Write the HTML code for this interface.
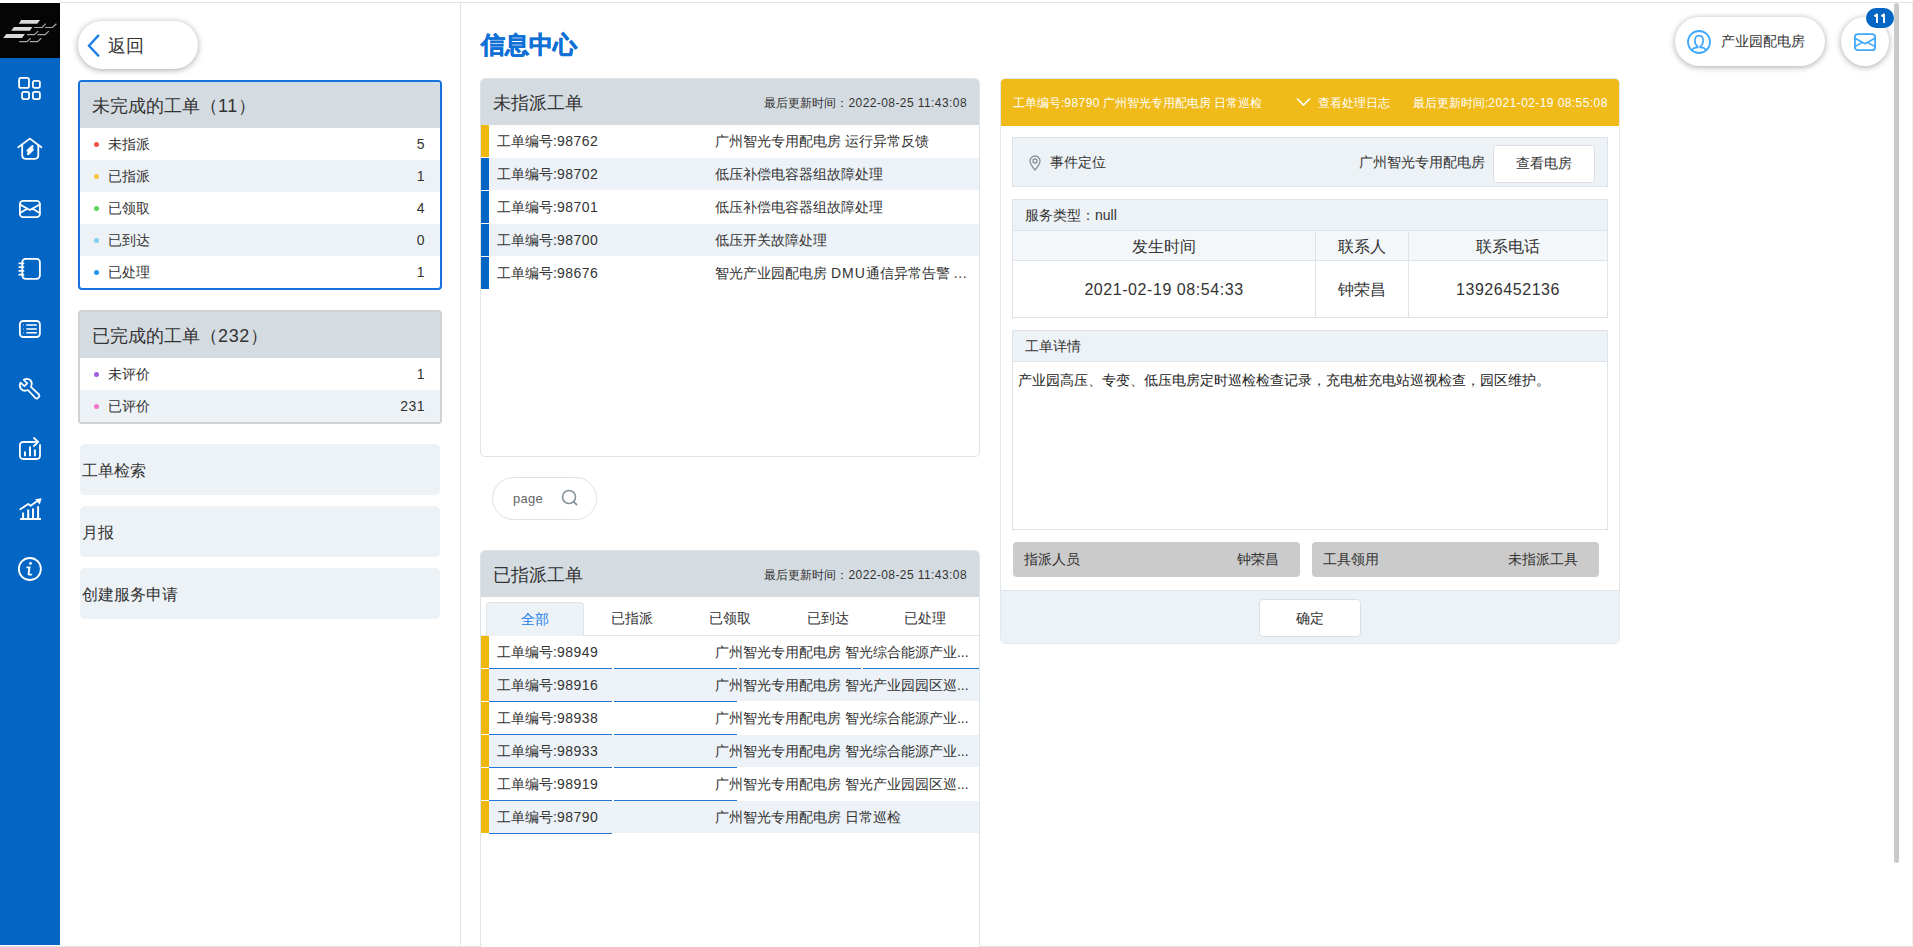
<!DOCTYPE html>
<html><head><meta charset="utf-8">
<style>
*{box-sizing:border-box;margin:0;padding:0}
html,body{width:1913px;height:947px;overflow:hidden;background:#fff;font-family:"Liberation Sans",sans-serif;color:#333}
.abs{position:absolute}
#topline{left:60px;top:2px;width:1853px;height:1px;background:#e2e4e4}
#botline{left:0;top:945.5px;width:1913px;height:1.5px;background:#e2e2e2}
#side{left:0;top:3px;width:60px;height:942px;background:#0366c4}
#logo{left:0;top:3px;width:60px;height:55px;background:#050505}
.ico{position:absolute;left:17px;width:26px;height:26px}
#divider{left:460px;top:3px;width:1px;height:942px;background:#e3e3e3}
#back{left:78px;top:21px;width:120px;height:48px;border-radius:24px;background:#fff;box-shadow:0 1px 6px rgba(0,0,0,.35)}
#back .t{position:absolute;left:30px;top:14px;font-size:18px;line-height:22px;color:#333}
.card{position:absolute;left:78px;width:364px;border-radius:4px;overflow:hidden;background:#fff}
.card .hd{height:46px;background:#d5dce1;font-size:18px;line-height:48px;padding-left:12px;color:#333}
.card .row{height:32px;line-height:32px;font-size:14px;position:relative;padding-left:28px}
.card .row.alt{background:#edf2f7}
.card .row .dot{position:absolute;left:14px;top:14px;width:5px;height:5px;border-radius:50%}
.card .row .n{position:absolute;right:15px;top:0}
.menu{position:absolute;left:80px;width:360px;height:51px;background:#edf2f7;border-radius:5px;font-size:16px;line-height:53px;padding-left:2px;color:#333}
#title{left:481px;top:29.3px;font-size:23.6px;line-height:32px;font-weight:bold;color:#0f70d6;-webkit-text-stroke:0.6px #0f70d6}
.panel{position:absolute;left:480px;width:500px;border:1px solid #e0e3e6;border-radius:5px;overflow:hidden;background:#fff}
.panel .hd{height:46px;background:#d5dce1;position:relative}
.panel .hd .t{position:absolute;left:12px;top:13px;font-size:18px;line-height:22px;color:#333}
.panel .hd .tm{position:absolute;right:12px;top:16px;font-size:12px;line-height:16px;color:#333}
.prow{height:33px;position:relative;font-size:14px;line-height:33px}
.prow.alt{background:linear-gradient(#ecf2f7,#ecf2f7) no-repeat;background-size:100% 32px}
.prow .bar{position:absolute;left:0;top:0;width:8px;height:32px;background:#0366c4}
.prow .bar.y{background:#f0b70f}
.prow .a{position:absolute;left:16px;top:0}
.prow .b{position:absolute;left:234px;top:0}

#search{left:492px;top:477px;width:105px;height:43px;border:1px solid #dde1e6;border-radius:22px;background:#fff}
#search .t{position:absolute;left:20px;top:12px;font-size:13px;line-height:18px;color:#666;letter-spacing:0.3px}
.tabs{position:relative;height:39px;border-bottom:1px solid #e3e6e9}
.tab{position:absolute;top:5px;width:97.6px;height:34px;text-align:center;font-size:14px;line-height:33px;color:#333}
.tab.on{background:#edf2f7;border:1px solid #dfe4e9;border-bottom:none;border-radius:4px 4px 0 0;color:#1a7ee8;line-height:32px}
.prow .ul{position:absolute;bottom:-0.2px;height:1.5px;background:#2377d2;z-index:2}
#detail{left:1000px;top:78px;width:620px;height:566px;border:1px solid #e3e8ec;border-radius:5px;overflow:hidden;background:#fff}
#dhd{position:absolute;left:0;top:0;width:618px;height:47px;background:#f0ba18;color:#fff;font-size:12px;line-height:16px}
.box{position:absolute;left:11px;width:596px;border:1px solid #dde3e8;background:#edf2f6}
.gbar{position:absolute;top:463px;height:35px;background:#cbcbcb;border-radius:4px;font-size:14px;line-height:35px;color:#333}
#dfoot{position:absolute;left:0;top:511px;width:618px;height:54px;background:#edf2f6;border-top:1px solid #dde3e8}
.btnw{position:absolute;background:#fff;border:1px solid #dcdfe6;border-radius:4px;text-align:center;font-size:14px;color:#333}
#user{left:1675px;top:17px;width:150px;height:49px;border-radius:25px;background:#fff;box-shadow:0 1px 6px rgba(0,0,0,.35)}
#mail{left:1841px;top:17px;width:48px;height:49px;border-radius:50%;background:#fff;box-shadow:0 1px 6px rgba(0,0,0,.35)}
#badge{left:1866px;top:8px;width:28px;height:20px;border-radius:10px;background:#0366c4;color:#fff;font-size:12.5px;line-height:20px;text-align:center;-webkit-text-stroke:0.4px #fff}
#scroll{left:1894px;top:3px;width:5px;height:860px;border-radius:3px;background:#c9cacc}
#rline{left:1912px;top:3px;width:1px;height:942px;background:#eee}
.dg{letter-spacing:0.035em}
</style></head><body>
<div class="abs" id="topline"></div>
<div class="abs" id="side"></div>
<div class="abs" id="logo"></div>
<div class="abs" id="divider"></div>
<svg class="abs" style="left:0;top:0" width="60" height="600" viewBox="0 0 60 600">
 <g fill="#d9d9d9">
  <polygon points="21.1,19.9 40.1,19.9 37.2,23.7 18.8,23.7"/>
  <polygon points="13.9,26.9 32.5,26.9 29.8,30.7 11.2,30.7"/>
  <polygon points="6.3,34.1 24.9,34.1 22,37.9 3.2,37.9"/>
 </g>
 <g fill="none" stroke="#a8a8a8" stroke-width="1.2">
  <path d="M34.2 27.5 H42.2 L45.6 23.7 M45 27.5 H52.4 L56.4 23.7"/>
  <path d="M27 34.7 H34.4 L38.2 31.1 M37.4 34.7 H45 L48.8 31.1"/>
  <path d="M19.2 41.7 H27 L30.6 38.3 M29.8 41.7 H37.4 L41.2 38.3"/>
 </g>
 <g fill="none" stroke="#fff" stroke-width="1.8" stroke-linejoin="round" stroke-linecap="round">
  <rect x="19.1" y="77.9" width="9.9" height="10" rx="2"/>
  <rect x="32.9" y="80.8" width="7" height="7.1" rx="1.8"/>
  <rect x="22.1" y="91.8" width="7" height="7.3" rx="1.8"/>
  <rect x="32.9" y="91.8" width="7" height="7.3" rx="1.8"/>
  <path d="M18.3 147.2 L29.85 138.6 L41.4 147.2"/>
  <path d="M22.2 145 V155.6 Q22.2 158.8 25.4 158.8 H35.1 Q38.3 158.8 38.3 155.6 V145"/>
  <rect x="19.9" y="200.8" width="20" height="16.4" rx="3.3"/>
  <path d="M20 204.5 L29.85 210 L39.8 204.5 M20 213 L26.3 209.3 M39.8 213 L33.4 209.3"/>
  <rect x="22.3" y="258.9" width="17.6" height="20" rx="3.3"/>
  <path d="M19.3 263.3 H23.5 M19.3 267.1 H23.5 M19.3 270.9 H23.5 M19.3 274.7 H23.5"/>
  <rect x="19.9" y="321" width="20" height="16" rx="3.3"/>
  <path d="M23.5 325 H24 M23.5 329 H24 M23.5 332.8 H24 M26.3 325 H36.8 M26.3 329 H36.8 M26.3 332.8 H36.8" stroke-linecap="butt" stroke-width="1.6"/>
  <path d="M23.8 379.8 Q27.6 377.6 30.6 380.4 Q32.8 383.4 30.9 386.9 L39 394.5 Q40 395.6 39 396.8 L37.6 398.2 Q36.5 399.1 35.5 398.1 L27.9 390 Q24.1 391.8 21.2 389.1 Q18.8 386.2 20.5 382.7 L24.3 386.2 L27.3 383.3 Z"/>
  <path d="M33.6 441.9 H23.6 Q19.9 441.9 19.9 445.6 V455.5 Q19.9 459 23.6 459 H36.4 Q40 459 40 455.5 V445"/>
  <path d="M23.5 441.9 H38.2 M33.9 438 L38.2 441.9 L33.9 446"/>
  <path d="M25 451.5 V456.3 M30 446.6 V456.3 M34.9 449.4 V456.3" stroke-linecap="butt" stroke-width="2"/>
  <path d="M20.1 519 H41 M23.1 512.4 V518 M28.2 509.4 V518 M33 508.4 V518 M38.1 506.2 V518" stroke-linecap="butt" stroke-width="2"/>
  <path d="M20.3 509.3 L28.2 504 L30.6 505.8 L36.6 501.6"/>
  <circle cx="29.85" cy="569" r="11"/>
 </g>
 <polygon fill="#fff" points="41.7,498.2 35.1,499.3 39.7,504.6"/>
 <path fill="none" stroke="#fff" stroke-width="2.6" stroke-linecap="round" stroke-linejoin="round" d="M32.4 146.4 L27.8 150.6 L32.6 149.6 L28.2 153.8"/>
 <circle fill="#fff" cx="30.5" cy="563.4" r="1.4"/>
 <path fill="none" stroke="#fff" stroke-width="1.9" stroke-linecap="round" d="M27.3 567.4 H29.5 L28.6 573.5 Q28.5 574.6 29.6 574.6 H31.3"/>
</svg>
<div class="abs" id="botline"></div>

<div class="abs" id="back"><svg class="abs" style="left:9px;top:13px" width="14" height="24" viewBox="0 0 14 24"><path d="M11.3 1.6 L2 11.7 L11.3 21.6" fill="none" stroke="#1a7ee8" stroke-width="2.3" stroke-linecap="round"/></svg><span class="t">返回</span></div>

<div class="card" style="top:80px;border:2px solid #1672dd">
 <div class="hd">未完成的工单（<span class="dg">11</span>）</div>
 <div class="row"><span class="dot" style="background:#f0524a"></span>未指派<span class="n"><span class="dg">5</span></span></div>
 <div class="row alt"><span class="dot" style="background:#f8c440"></span>已指派<span class="n"><span class="dg">1</span></span></div>
 <div class="row"><span class="dot" style="background:#5bd45a"></span>已领取<span class="n"><span class="dg">4</span></span></div>
 <div class="row alt"><span class="dot" style="background:#80d0ef"></span>已到达<span class="n"><span class="dg">0</span></span></div>
 <div class="row"><span class="dot" style="background:#2196f3"></span>已处理<span class="n"><span class="dg">1</span></span></div>
</div>

<div class="card" style="top:310px;border:2px solid #d0d3d6">
 <div class="hd">已完成的工单（<span class="dg">232</span>）</div>
 <div class="row"><span class="dot" style="background:#a05ee0"></span>未评价<span class="n"><span class="dg">1</span></span></div>
 <div class="row alt"><span class="dot" style="background:#f571c8"></span>已评价<span class="n"><span class="dg">231</span></span></div>
</div>

<div class="menu" style="top:444px">工单检索</div>
<div class="menu" style="top:506px">月报</div>
<div class="menu" style="top:568px">创建服务申请</div>

<div class="abs" id="title">信息中心</div>

<div class="panel" style="top:78px;height:379px">
 <div class="hd"><span class="t">未指派工单</span><span class="tm">最后更新时间：<span class="dg">2022-08-25 11:43:08</span></span></div>
 <div class="prow"><span class="bar y"></span><span class="a">工单编号:<span class="dg">98762</span></span><span class="b">广州智光专用配电房 运行异常反馈</span></div>
 <div class="prow alt"><span class="bar"></span><span class="a">工单编号:<span class="dg">98702</span></span><span class="b">低压补偿电容器组故障处理</span></div>
 <div class="prow"><span class="bar"></span><span class="a">工单编号:<span class="dg">98701</span></span><span class="b">低压补偿电容器组故障处理</span></div>
 <div class="prow alt"><span class="bar"></span><span class="a">工单编号:<span class="dg">98700</span></span><span class="b">低压开关故障处理</span></div>
 <div class="prow"><span class="bar"></span><span class="a">工单编号:<span class="dg">98676</span></span><span class="b">智光产业园配电房 <span style="letter-spacing:1px">DMU</span>通信异常告警 <span style="letter-spacing:0.7px">...</span></span></div>
</div>


<div class="abs" id="search"><span class="t">page</span><svg class="abs" style="left:68px;top:11px" width="18" height="18" viewBox="0 0 18 18"><circle cx="8" cy="8" r="6.5" fill="none" stroke="#87939b" stroke-width="1.6"/><path d="M12.6 12.6 L15.6 15.6" stroke="#8a9299" stroke-width="1.8" stroke-linecap="round"/></svg></div>

<div class="panel" style="top:550px;height:400px">
 <div class="hd"><span class="t">已指派工单</span><span class="tm">最后更新时间：<span class="dg">2022-08-25 11:43:08</span></span></div>
 <div class="tabs">
  <div class="tab on" style="left:5px">全部</div>
  <div class="tab" style="left:102.6px">已指派</div>
  <div class="tab" style="left:200.2px">已领取</div>
  <div class="tab" style="left:297.8px">已到达</div>
  <div class="tab" style="left:395.4px">已处理</div>
 </div>
 <div class="prow"><span class="bar y"></span><span class="a">工单编号:<span class="dg">98949</span></span><span class="b">广州智光专用配电房 智光综合能源产业...</span><span class="ul" style="left:8px;width:123px"></span><span class="ul" style="left:133px;width:123px"></span><span class="ul" style="left:258px;width:122px"></span><span class="ul" style="left:382px;width:116px"></span></div>
 <div class="prow alt"><span class="bar y"></span><span class="a">工单编号:<span class="dg">98916</span></span><span class="b">广州智光专用配电房 智光产业园园区巡...</span><span class="ul" style="left:8px;width:123px"></span><span class="ul" style="left:133px;width:123px"></span></div>
 <div class="prow"><span class="bar y"></span><span class="a">工单编号:<span class="dg">98938</span></span><span class="b">广州智光专用配电房 智光综合能源产业...</span><span class="ul" style="left:8px;width:123px"></span><span class="ul" style="left:133px;width:123px"></span></div>
 <div class="prow alt"><span class="bar y"></span><span class="a">工单编号:<span class="dg">98933</span></span><span class="b">广州智光专用配电房 智光综合能源产业...</span><span class="ul" style="left:8px;width:123px"></span><span class="ul" style="left:133px;width:123px"></span></div>
 <div class="prow"><span class="bar y"></span><span class="a">工单编号:<span class="dg">98919</span></span><span class="b">广州智光专用配电房 智光产业园园区巡...</span><span class="ul" style="left:8px;width:123px"></span><span class="ul" style="left:133px;width:123px"></span></div>
 <div class="prow alt"><span class="bar y"></span><span class="a">工单编号:<span class="dg">98790</span></span><span class="b">广州智光专用配电房 日常巡检</span><span class="ul" style="left:8px;width:123px"></span></div>
</div>

<div class="abs" id="detail">
 <div id="dhd">
  <span class="abs" style="left:12px;top:16px">工单编号:<span class="dg">98790</span> 广州智光专用配电房 日常巡检</span>
  <svg class="abs" style="left:295px;top:18px" width="15" height="10" viewBox="0 0 15 10"><path d="M1 1.5 L7.5 8 L14 1.5" fill="none" stroke="#fff" stroke-width="1.6"/></svg>
  <span class="abs" style="left:317px;top:16px">查看处理日志</span>
  <span class="abs" style="left:412px;top:16px">最后更新时间:<span class="dg">2021-02-19 08:55:08</span></span>
 </div>
 <div class="box" style="top:58px;height:50px">
  <svg class="abs" style="left:16px;top:17px" width="12" height="16" viewBox="0 0 12 16"><path d="M6 15 C3 11.5 1 9 1 6 A5 5 0 0 1 11 6 C11 9 9 11.5 6 15 Z" fill="none" stroke="#8a9299" stroke-width="1.3"/><circle cx="6" cy="6" r="2" fill="none" stroke="#8a9299" stroke-width="1.3"/></svg>
  <span class="abs" style="left:37px;top:15px;font-size:14px;line-height:18px;color:#333">事件定位</span>
  <span class="abs" style="left:346px;top:15px;font-size:14px;line-height:18px;color:#333">广州智光专用配电房</span>
  <div class="btnw" style="left:480px;top:7px;width:102px;height:38px;line-height:34px">查看电房</div>
 </div>
 <div class="box" style="top:120px;height:119px;background:#fff">
  <div style="position:absolute;left:0;top:0;width:594px;height:31px;background:#edf2f6;border-bottom:1px solid #dde3e8;font-size:14px;line-height:30px;padding-left:12px;color:#333">服务类型：null</div>
  <div style="position:absolute;left:0;top:31px;width:594px;height:30px;background:#f4f7f9;border-bottom:1px solid #dde3e8"></div>
  <div style="position:absolute;left:302px;top:31px;width:1px;height:86px;background:#dde3e8"></div>
  <div style="position:absolute;left:395px;top:31px;width:1px;height:86px;background:#dde3e8"></div>
  <div style="position:absolute;left:0;top:32px;width:302px;text-align:center;font-size:16px;line-height:30px;color:#333">发生时间</div>
  <div style="position:absolute;left:303px;top:32px;width:92px;text-align:center;font-size:16px;line-height:30px;color:#333">联系人</div>
  <div style="position:absolute;left:396px;top:32px;width:198px;text-align:center;font-size:16px;line-height:30px;color:#333">联系电话</div>
  <div style="position:absolute;left:0;top:62px;width:302px;text-align:center;font-size:16px;line-height:56px;color:#333"><span class="dg">2021-02-19 08:54:33</span></div>
  <div style="position:absolute;left:303px;top:62px;width:92px;text-align:center;font-size:16px;line-height:56px;color:#333">钟荣昌</div>
  <div style="position:absolute;left:396px;top:62px;width:198px;text-align:center;font-size:16px;line-height:56px;color:#333"><span class="dg">13926452136</span></div>
 </div>
 <div class="box" style="top:251px;height:200px;background:#fff">
  <div style="position:absolute;left:0;top:0;width:594px;height:31px;background:#edf2f6;border-bottom:1px solid #dde3e8;font-size:14px;line-height:30px;padding-left:12px;color:#333">工单详情</div>
  <div style="position:absolute;left:5px;top:39px;font-size:14px;line-height:20px;color:#222">产业园高压、专变、低压电房定时巡检检查记录，充电桩充电站巡视检查，园区维护。</div>
 </div>
 <div class="gbar" style="left:12px;width:287px"><span class="abs" style="left:11px">指派人员</span><span class="abs" style="right:21px">钟荣昌</span></div>
 <div class="gbar" style="left:311px;width:287px"><span class="abs" style="left:11px">工具领用</span><span class="abs" style="right:21px">未指派工具</span></div>
 <div id="dfoot"><div class="btnw" style="left:258px;top:8px;width:102px;height:38px;line-height:36px">确定</div></div>
</div>

<div class="abs" id="user"><svg class="abs" style="left:12px;top:13px" width="24" height="24" viewBox="0 0 24 24"><circle cx="12" cy="12" r="11" fill="none" stroke="#40a8fd" stroke-width="1.8"/><path d="M5 20 Q6.6 17.4 10.7 17.3 V16.5 Q7.9 14.7 7.9 10.6 Q7.9 5.7 12 5.7 Q16.1 5.7 16.1 10.6 Q16.1 14.7 13.3 16.5 V17.3 Q17.4 17.4 19 20" fill="none" stroke="#40a8fd" stroke-width="1.7"/></svg><span class="abs" style="left:46px;top:15px;font-size:14px;line-height:18px;color:#333">产业园配电房</span></div>
<div class="abs" id="mail"><svg class="abs" style="left:12px;top:16px" width="24" height="19" viewBox="0 0 24 19"><rect x="1.9" y="1.2" width="20.2" height="16" rx="3" fill="none" stroke="#40a8fd" stroke-width="1.8"/><path d="M2 5.2 L12 10.8 L22 5.2 M2 13.6 L9 9.6 M22 13.6 L15 9.6" fill="none" stroke="#40a8fd" stroke-width="1.6"/></svg></div>
<div class="abs" id="badge"><svg class="abs" style="left:0;top:0" width="28" height="20" viewBox="0 0 28 20"><path d="M8.3 8.2 L11 6.4 V14.9 M15.3 8.2 L18 6.4 V14.9" fill="none" stroke="#fff" stroke-width="1.9" stroke-linejoin="round"/></svg></div>
<div class="abs" id="scroll"></div>
<div class="abs" id="rline"></div>
</body></html>
